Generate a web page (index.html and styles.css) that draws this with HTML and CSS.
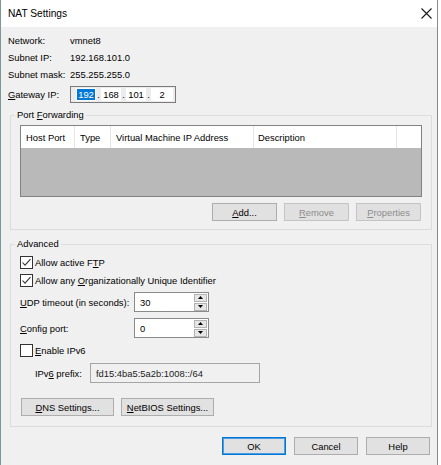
FILE: index.html
```html
<!DOCTYPE html>
<html>
<head>
<meta charset="utf-8">
<title>NAT Settings</title>
<link rel="stylesheet" href="styles.css">
</head>
<body>
<div class="window">
  <div class="titlebar">
    <span class="title">NAT Settings</span>
    <svg class="close" width="11" height="11" viewBox="0 0 11 11"><path d="M0.5 0.5L10.5 10.5M10.5 0.5L0.5 10.5" stroke="#1a1a1a" stroke-width="1.1" fill="none"/></svg>
  </div>
  <div class="content">
    <div class="info">
      <div class="row"><span class="lbl">Network:</span><span>vmnet8</span></div>
      <div class="row"><span class="lbl">Subnet IP:</span><span>192.168.101.0</span></div>
      <div class="row"><span class="lbl">Subnet mask:</span><span>255.255.255.0</span></div>
      <div class="row gw">
        <span class="lbl"><u>G</u>ateway IP:</span>
        <div class="ipfield">
          <span class="oct"><span class="sel">192</span></span><span class="dot">.</span>
          <span class="oct">168</span><span class="dot">.</span>
          <span class="oct">101</span><span class="dot">.</span>
          <span class="oct last">2</span>
        </div>
      </div>
    </div>

    <fieldset class="group pf">
      <legend>Port <u>F</u>orwarding</legend>
      <div class="list">
        <div class="list-head">
          <span class="col c1">Host Port</span>
          <span class="col c2">Type</span>
          <span class="col c3">Virtual Machine IP Address</span>
          <span class="col c4">Description</span>
          <span class="col c5"></span>
        </div>
        <div class="list-body"></div>
      </div>
      <div class="btnrow">
        <button class="btn w65"><u>A</u>dd...</button>
        <button class="btn w65 dis"><u>R</u>emove</button>
        <button class="btn w65 dis"><u>P</u>roperties</button>
      </div>
    </fieldset>

    <fieldset class="group adv">
      <legend>Advanced</legend>
      <div class="cbrow">
        <svg class="cb" width="13" height="13" viewBox="0 0 13 13"><rect x="0.5" y="0.5" width="12" height="12" fill="#fff" stroke="#333"/><path d="M2.5 6.5L5 9.2L10.5 3.2" stroke="#333" stroke-width="1.1" fill="none"/></svg>
        <span>Allow active F<u>T</u>P</span>
      </div>
      <div class="cbrow">
        <svg class="cb" width="13" height="13" viewBox="0 0 13 13"><rect x="0.5" y="0.5" width="12" height="12" fill="#fff" stroke="#333"/><path d="M2.5 6.5L5 9.2L10.5 3.2" stroke="#333" stroke-width="1.1" fill="none"/></svg>
        <span>Allow any <u>O</u>rganizationally Unique Identifier</span>
      </div>
      <div class="frow udp">
        <span class="flbl"><u>U</u>DP timeout (in seconds):</span>
        <div class="spin">
          <span class="val">30</span>
          <div class="arrows">
            <span class="arr"><svg width="5" height="3" viewBox="0 0 5 3"><path d="M2.5 0L5 3H0Z" fill="#000"/></svg></span>
            <span class="arr"><svg width="5" height="3" viewBox="0 0 5 3"><path d="M0 0H5L2.5 3Z" fill="#000"/></svg></span>
          </div>
        </div>
      </div>
      <div class="frow cfg">
        <span class="flbl"><u>C</u>onfig port:</span>
        <div class="spin">
          <span class="val">0</span>
          <div class="arrows">
            <span class="arr"><svg width="5" height="3" viewBox="0 0 5 3"><path d="M2.5 0L5 3H0Z" fill="#000"/></svg></span>
            <span class="arr"><svg width="5" height="3" viewBox="0 0 5 3"><path d="M0 0H5L2.5 3Z" fill="#000"/></svg></span>
          </div>
        </div>
      </div>
      <div class="cbrow ipv6">
        <svg class="cb" width="13" height="13" viewBox="0 0 13 13"><rect x="0.5" y="0.5" width="12" height="12" fill="#fff" stroke="#333"/></svg>
        <span><u>E</u>nable IPv6</span>
      </div>
      <div class="frow prefix">
        <span class="plbl">IPv<u>6</u> prefix:</span>
        <div class="rofield">fd15:4ba5:5a2b:1008::/64</div>
      </div>
      <div class="btnrow2">
        <button class="btn w93"><u>D</u>NS Settings...</button>
        <button class="btn w93"><u>N</u>etBIOS Settings...</button>
      </div>
    </fieldset>

    <div class="footer">
      <button class="btn w64 def">OK</button>
      <button class="btn w64">Cancel</button>
      <button class="btn w64">Help</button>
    </div>
  </div>
</div>
</body>
</html>
```

FILE: styles.css
```css
* { box-sizing: border-box; }
html, body { margin: 0; padding: 0; background: #ffffff; }
body {
  font-family: "Liberation Sans", Arial, sans-serif;
  font-size: 9.4px;
  color: #000;
  white-space: nowrap;
}
u { text-decoration: underline; text-underline-offset: 1px; }

.window {
  width: 438px;
  height: 465px;
  border-left: 1px solid #7d9898;
  border-right: 1px solid #8a8a8a;
  background: #f0f0f0;
  display: flex;
  flex-direction: column;
}
.titlebar {
  height: 27px;
  flex: none;
  background: #fff;
  display: flex;
  align-items: center;
  justify-content: space-between;
  padding: 0 5px 0 7px;
}
.title { font-size: 10.2px; }

.content { padding: 0 5px 0 9px; }

.info { padding-top: 5px; margin-left: -2px; }
.row { display: flex; align-items: center; height: 17px; }
.lbl { width: 62px; flex: none; }
.row.gw { margin-top: 3px; }

.ipfield {
  width: 106px;
  height: 17px;
  border: 1px solid #7a7a7a;
  background: #ececec;
  display: flex;
  align-items: center;
  padding-left: 5px;
  padding-right: 2px;
}
.oct {
  width: 20px;
  height: 13px;
  background: #fff;
  display: flex;
  align-items: center;
  justify-content: center;
}
.oct.last { flex: 1; }
.sel { background: #0078d7; color: #fff; line-height: 11px; padding: 0 1px; }
.dot { width: 5px; text-align: center; }

.group {
  margin: 0;
  border: 1px solid #dcdcdc;
  padding: 0 9px;
  min-width: 0;
}
.group legend {
  padding: 0 2px;
  margin-left: -5px;
  line-height: 12px;
}
.pf { margin-top: 6px; width: 422px; padding-top: 4px; padding-bottom: 8px; }
.adv { margin-top: 8px; width: 422px; padding-top: 3px; padding-bottom: 10px; }

.list {
  border: 1px solid #828282;
  height: 72px;
  display: flex;
  flex-direction: column;
}
.list-head { height: 22px; background: #fff; display: flex; flex: none; }
.col {
  height: 22px;
  display: flex;
  align-items: center;
  padding-left: 5px;
  border-right: 1px solid #e5e5e5;
  flex: none;
}
.c1 { width: 54px; }
.c2 { width: 36px; }
.c3 { width: 143px; }
.c4 { width: 143px; padding-left: 4px; }
.c5 { flex: 1; border-right: none; }
.list-body { flex: 1; background: #b9b9b9; }

.btn {
  font: inherit;
  color: #000;
  height: 18px;
  padding: 0;
  border: 1px solid #adadad;
  background: #e1e1e1;
  margin: 0;
}
.btn.dis { color: #8c8c8c; background: #e0e0e0; border-color: #c4c4c4; }
.btn.def { border-color: #0078d7; box-shadow: inset 0 0 0 1px #4a9be0; }
.w65 { width: 65px; }
.w64 { width: 64px; }
.w93 { width: 93px; }

.btnrow {
  margin-top: 6px;
  display: flex;
  justify-content: flex-end;
  gap: 7px;
  margin-right: 1px;
}

.cbrow { display: flex; align-items: center; height: 18px; gap: 2px; }
.cb { flex: none; }

.frow { display: flex; align-items: center; }
.udp { margin-top: 3px; }
.cfg { margin-top: 6px; }
.ipv6 { margin-top: 3px; }
.prefix { margin-top: 4px; padding-left: 15px; }
.flbl { width: 114px; flex: none; }
.plbl { width: 55px; flex: none; }

.spin {
  width: 75px;
  height: 20px;
  border: 1px solid #8a8a8a;
  background: #fff;
  display: flex;
  align-items: center;
  padding-right: 1px;
}
.val { flex: 1; padding-left: 5px; }
.arrows { display: flex; flex-direction: column; gap: 1px; }
.arr {
  width: 13px;
  height: 8px;
  border: 1px solid #b3b3b3;
  background: #e6e6e6;
  display: flex;
  align-items: center;
  justify-content: center;
}
.arr svg { display: block; }

.rofield {
  width: 170px;
  height: 20px;
  border: 1px solid #a5a5a5;
  background: #f0f0f0;
  display: flex;
  align-items: center;
  padding-left: 5px;
  color: #222;
}

.btnrow2 { margin-top: 15px; display: flex; gap: 7px; padding-left: 1px; }

.footer {
  margin-top: 10px;
  display: flex;
  justify-content: flex-end;
  gap: 8px;
  margin-right: 2px;
}
```
